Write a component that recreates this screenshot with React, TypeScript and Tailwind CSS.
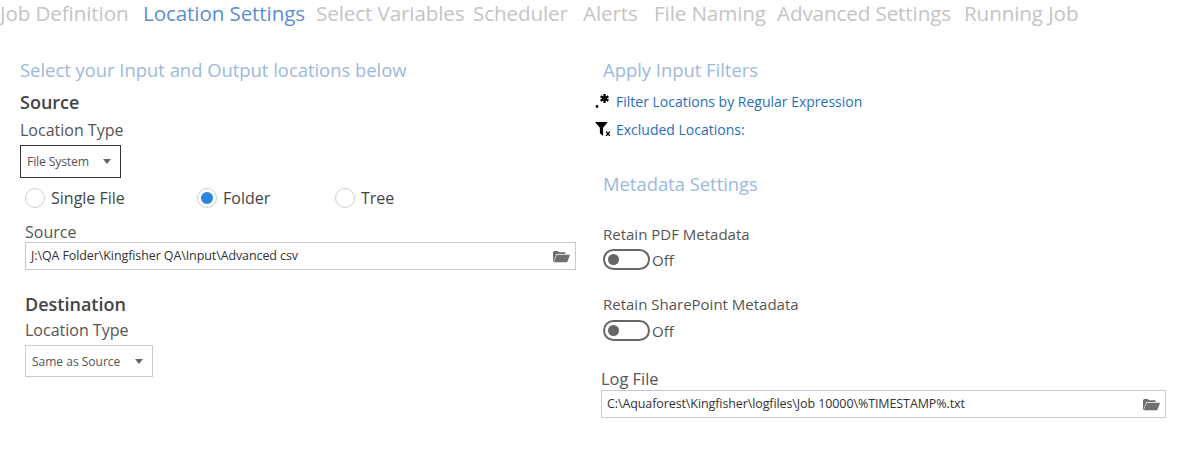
const font = "font-['Open_Sans','Noto_Sans',sans-serif]";

const tabs = [
  { label: 'Job Definition', className: 'w-[143px]' },
  { label: 'Location Settings', className: 'w-[173px] text-[#5b8fd0]' },
  { label: 'Select Variables', className: 'w-[157px]' },
  { label: 'Scheduler', className: 'w-[110px]' },
  { label: 'Alerts', className: 'w-[71px]' },
  { label: 'File Naming', className: 'w-[123px]' },
  { label: 'Advanced Settings', className: 'w-[187px]' },
  { label: 'Running Job', className: 'w-[130px]' },
];

function FolderIcon() {
  return (
    <svg width="18" height="14" viewBox="0 0 18 14" className="shrink-0">
      <path d="M1 13V3.2L2 2h4l1 1.2h6.5V5H4.2L1.6 12.4z" fill="#6f6f6f" />
      <path d="M4.6 5.8H18l-2.8 7.4H1.8z" fill="#6f6f6f" />
    </svg>
  );
}

function Caret() {
  return (
    <svg width="8" height="5" viewBox="0 0 8 5">
      <path d="M0 0h8L4 5z" fill="#666" />
    </svg>
  );
}

function Radio({ label, checked, className }: { label: string; checked?: boolean; className: string }) {
  return (
    <div className={`flex items-center gap-[6px] ${className}`}>
      <span className="flex h-[20px] w-[20px] items-center justify-center rounded-full border border-[#cfcfcf] bg-white">
        {checked && <span className="h-[12px] w-[12px] rounded-full bg-[#2a86dc]" />}
      </span>
      <span className="text-[16px] leading-5 text-[#444]">{label}</span>
    </div>
  );
}

function PathInput({ value, className }: { value: string; className: string }) {
  return (
    <div className={`flex h-[28px] items-center justify-between border border-[#c8c8c8] bg-white pl-[5px] pr-[5px] ${className}`}>
      <span className="text-[12.5px] tracking-[-0.1px] text-[#333]">{value}</span>
      <FolderIcon />
    </div>
  );
}

function Toggle({ className }: { className: string }) {
  return (
    <div className={`flex items-center ${className}`}>
      <span className="flex h-[21px] w-[47px] items-center rounded-full border-[2px] border-[#666] pl-[3px]">
        <span className="h-[11px] w-[11px] rounded-full bg-[#666]" />
      </span>
      <span className="ml-[2px] text-[15px] leading-5 text-[#555]">Off</span>
    </div>
  );
}

function SmallLabel({ children }: { children: string }) {
  return <div className="text-[15px] leading-5 text-[#555]">{children}</div>;
}

export default function App() {
  return (
    <div className={`h-[455px] w-[1181px] overflow-hidden bg-white ${font}`}>
      <div className="flex h-[26px] items-center whitespace-nowrap text-[20.6px] tracking-[-0.1px] text-[#c4c4c4]">
        {tabs.map((t) => (
          <span key={t.label} className={t.className}>
            {t.label}
          </span>
        ))}
      </div>

      <div className="flex">
        <div className="ml-[20px] w-[556px] pt-[32px]">
          <h2 className="text-[18.4px] leading-6 text-[#9cb8e0]">Select your Input and Output locations below</h2>
          <h3 className="mt-[8px] text-[18px] font-semibold leading-6 text-[#444]">Source</h3>
          <div className="mt-[4px] text-[16px] leading-6 text-[#555]">Location Type</div>
          <div className="mt-[3px] flex h-[33px] w-[101px] items-center justify-between border border-[#333] pl-[6px] pr-[9px]">
            <span className="pt-[1px] text-[12.3px] tracking-[-0.2px] text-[#555]">File System</span>
            <Caret />
          </div>
          <div className="mt-[10px] ml-[5px] flex">
            <Radio label="Single File" className="w-[172px]" />
            <Radio label="Folder" checked className="w-[138px]" />
            <Radio label="Tree" className="w-[80px]" />
          </div>
          <div className="ml-[5px] mt-[14px]">
            <div className="text-[16px] leading-[20px] text-[#555]">Source</div>
            <PathInput value="J:\QA Folder\Kingfisher QA\Input\Advanced csv" className="w-[551px]" />
          </div>
          <div className="ml-[5px] mt-[22px]">
            <h3 className="text-[18px] font-semibold leading-6 text-[#444]">Destination</h3>
            <div className="mt-[1px] text-[16px] leading-[26px] text-[#555]">Location Type</div>
            <div className="mt-[2px] flex h-[32px] w-[128px] items-center justify-between border border-[#ccc] pl-[6px] pr-[9px]">
              <span className="pt-[1px] text-[12px] text-[#555]">Same as Source</span>
              <Caret />
            </div>
          </div>
        </div>

        <div className="ml-[25px] w-[566px] pt-[30px]">
          <h2 className="ml-[2px] text-[18.4px] leading-7 text-[#9cb8e0]">Apply Input Filters</h2>
          <div className="mt-[3px] flex h-[28px] items-center text-[14px] text-[#2a6ebb]">
            <span className="-ml-[7px] w-[22px] text-[#000]">
              <svg width="18" height="18" viewBox="0 0 18 18">
                <circle cx="3" cy="14.5" r="1.4" fill="#000" />
                <path d="M10.5 2v9M6.6 4.3l7.8 4.5M14.4 4.3l-7.8 4.5" stroke="#000" strokeWidth="2.3" />
              </svg>
            </span>
            Filter Locations by Regular Expression
          </div>
          <div className="flex h-[28px] items-center text-[14px] text-[#2a6ebb]">
            <span className="-ml-[6px] w-[21px]">
              <svg width="17" height="17" viewBox="0 0 16 16">
                <path d="M0 1h12L7.6 6.4V14L4.6 11.6V6.4z" fill="#000" />
                <path d="M10.5 10l3.5 4M14 10l-3.5 4" stroke="#000" strokeWidth="1.4" />
              </svg>
            </span>
            Excluded Locations:
          </div>
          <h2 className="ml-[2px] mt-[27px] text-[18.4px] leading-7 text-[#9cb8e0]">Metadata Settings</h2>
          <div className="ml-[2px] mt-[26px]">
            <SmallLabel>Retain PDF Metadata</SmallLabel>
            <Toggle className="mt-[5px]" />
          </div>
          <div className="ml-[2px] mt-[24px]">
            <SmallLabel>Retain SharePoint Metadata</SmallLabel>
            <Toggle className="mt-[6px]" />
          </div>
          <div className="mt-[27px]">
            <div className="text-[16.4px] leading-[22px] text-[#555]">Log File</div>
            <PathInput value="C:\Aquaforest\Kingfisher\logfiles\Job 10000\%TIMESTAMP%.txt" className="w-[565px]" />
          </div>
        </div>
      </div>
    </div>
  );
}
